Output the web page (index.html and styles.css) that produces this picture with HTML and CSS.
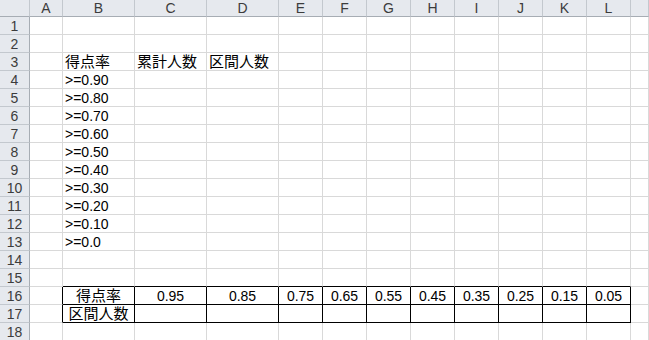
FILE: index.html
```html
<!DOCTYPE html>
<html lang="ja">
<head>
    <meta charset="utf-8">
    <title>Sheet1</title>
    <link rel="stylesheet" href="styles.css">
</head>
<body>
    <table class="sheet">
        <colgroup>
            <col class="col-rowhead">
            <col class="col-a">
            <col class="col-wide">
            <col class="col-wide">
            <col class="col-wide">
            <col class="col-narrow">
            <col class="col-narrow">
            <col class="col-narrow">
            <col class="col-narrow">
            <col class="col-narrow">
            <col class="col-narrow">
            <col class="col-narrow">
            <col class="col-narrow">
            <col>
        </colgroup>
        <thead>
            <tr class="colhead">
                <th class="corner"></th>
                <th>A</th><th>B</th><th>C</th><th>D</th><th>E</th><th>F</th>
                <th>G</th><th>H</th><th>I</th><th>J</th><th>K</th><th>L</th><th></th>
            </tr>
        </thead>
        <tbody>
            <tr><th>1</th><td></td><td></td><td></td><td></td><td></td><td></td><td></td><td></td><td></td><td></td><td></td><td></td><td></td></tr>
            <tr><th>2</th><td></td><td></td><td></td><td></td><td></td><td></td><td></td><td></td><td></td><td></td><td></td><td></td><td></td></tr>
            <tr><th>3</th><td></td><td class="jp">得点率</td><td class="jp">累計人数</td><td class="jp">区間人数</td><td></td><td></td><td></td><td></td><td></td><td></td><td></td><td></td><td></td></tr>
            <tr><th>4</th><td></td><td>&gt;=0.90</td><td></td><td></td><td></td><td></td><td></td><td></td><td></td><td></td><td></td><td></td><td></td></tr>
            <tr><th>5</th><td></td><td>&gt;=0.80</td><td></td><td></td><td></td><td></td><td></td><td></td><td></td><td></td><td></td><td></td><td></td></tr>
            <tr><th>6</th><td></td><td>&gt;=0.70</td><td></td><td></td><td></td><td></td><td></td><td></td><td></td><td></td><td></td><td></td><td></td></tr>
            <tr><th>7</th><td></td><td>&gt;=0.60</td><td></td><td></td><td></td><td></td><td></td><td></td><td></td><td></td><td></td><td></td><td></td></tr>
            <tr><th>8</th><td></td><td>&gt;=0.50</td><td></td><td></td><td></td><td></td><td></td><td></td><td></td><td></td><td></td><td></td><td></td></tr>
            <tr><th>9</th><td></td><td>&gt;=0.40</td><td></td><td></td><td></td><td></td><td></td><td></td><td></td><td></td><td></td><td></td><td></td></tr>
            <tr><th>10</th><td></td><td>&gt;=0.30</td><td></td><td></td><td></td><td></td><td></td><td></td><td></td><td></td><td></td><td></td><td></td></tr>
            <tr><th>11</th><td></td><td>&gt;=0.20</td><td></td><td></td><td></td><td></td><td></td><td></td><td></td><td></td><td></td><td></td><td></td></tr>
            <tr><th>12</th><td></td><td>&gt;=0.10</td><td></td><td></td><td></td><td></td><td></td><td></td><td></td><td></td><td></td><td></td><td></td></tr>
            <tr><th>13</th><td></td><td>&gt;=0.0</td><td></td><td></td><td></td><td></td><td></td><td></td><td></td><td></td><td></td><td></td><td></td></tr>
            <tr><th>14</th><td></td><td></td><td></td><td></td><td></td><td></td><td></td><td></td><td></td><td></td><td></td><td></td><td></td></tr>
            <tr class="above-box"><th>15</th><td></td><td></td><td></td><td></td><td></td><td></td><td></td><td></td><td></td><td></td><td></td><td></td><td></td></tr>
            <tr class="box">
                <th>16</th><td></td>
                <td class="jp">得点率</td>
                <td>0.95</td><td>0.85</td><td>0.75</td><td>0.65</td><td>0.55</td>
                <td>0.45</td><td>0.35</td><td>0.25</td><td>0.15</td><td>0.05</td>
                <td></td>
            </tr>
            <tr class="box">
                <th>17</th><td></td>
                <td class="jp">区間人数</td>
                <td></td><td></td><td></td><td></td><td></td><td></td><td></td><td></td><td></td><td></td>
                <td></td>
            </tr>
            <tr><th>18</th><td></td><td></td><td></td><td></td><td></td><td></td><td></td><td></td><td></td><td></td><td></td><td></td><td></td></tr>
        </tbody>
    </table>
</body>
</html>
```

FILE: styles.css
```css
body {
    margin: 0;
    background: #ffffff;
    font-family: 'Liberation Sans', 'Noto Sans CJK JP', sans-serif;
    font-size: 14px;
    color: #000000;
}

.sheet {
    width: 649px;
    table-layout: fixed;
    border-collapse: separate;
    border-spacing: 0;
}

.col-rowhead { width: 30px; }
.col-a { width: 33px; }
.col-wide { width: 72px; }
.col-narrow { width: 44px; }

.sheet th,
.sheet td {
    box-sizing: border-box;
    height: 18px;
    padding: 0 2px;
    line-height: 16px;
    vertical-align: bottom;
    white-space: nowrap;
    overflow: hidden;
    border-right: 1px solid #d9d9d9;
    border-bottom: 1px solid #d9d9d9;
}

/* headers */
.sheet th {
    font-weight: normal;
    color: #3c3c3c;
    text-align: center;
    background: #e6e9ee;
    border-right-color: #c3c8ce;
    border-bottom-color: #c3c8ce;
}

.colhead th {
    height: 17px;
    border-bottom-color: #a7adb4;
}

.sheet tbody th {
    border-right-color: #a7adb4;
}

.corner {
    background: #e6e9ee linear-gradient(135deg, transparent 50%, #cfd3d8 50%) no-repeat right 2px bottom 2px / 10px 10px;
}

.jp {
    font-size: 15px;
}

/* bordered block B16:L17 */
.above-box td:nth-child(n+3):nth-child(-n+13) {
    border-bottom-color: #000000;
}

.box td:nth-child(2) {
    border-right-color: #000000;
}

.box td:nth-child(n+3):nth-child(-n+13) {
    text-align: center;
    border-right-color: #000000;
    border-bottom-color: #000000;
}
```
